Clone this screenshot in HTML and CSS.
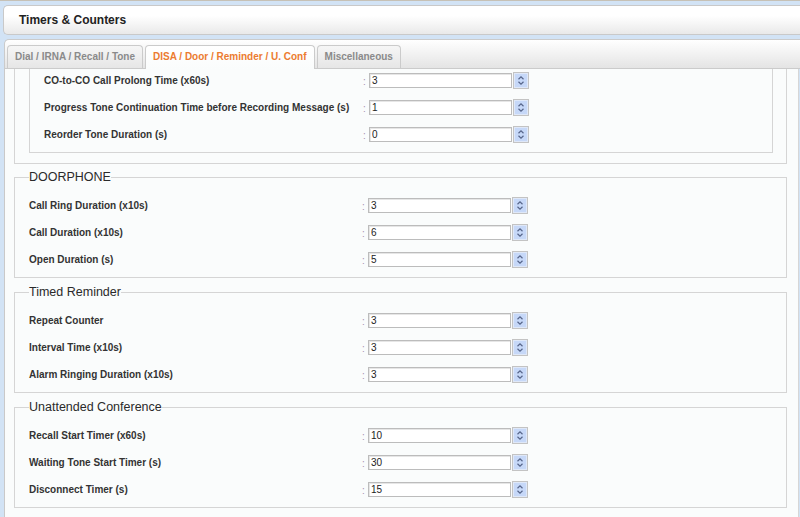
FILE: index.html
```html
<!DOCTYPE html>
<html>
<head>
<meta charset="utf-8">
<title>Timers &amp; Counters</title>
<link rel="stylesheet" href="styles.css">
</head>
<body>
<div class="page">
  <header class="titlebar"><h1>Timers &amp; Counters</h1></header>
  <div class="tabs-panel">
    <ul class="tabbar">
      <li class="tab">Dial / IRNA / Recall / Tone</li>
      <li class="tab active">DISA / Door / Reminder / U. Conf</li>
      <li class="tab">Miscellaneous</li>
    </ul>
    <div class="pane">
      <div class="outer-cut">
        <div class="inner-cut rows">
          <div class="row"><span class="label inner">CO-to-CO Call Prolong Time (x60s)</span><span class="colon">:</span><input class="num" type="text" value="3"><span class="spin"><svg viewBox="0 0 14 15" width="14" height="15"><path d="M4.5 6.2 L7 3.8 L9.5 6.2 M4.5 8.8 L7 11.2 L9.5 8.8" fill="none" stroke="#56658a" stroke-width="1.2"/></svg></span></div>
          <div class="row"><span class="label inner">Progress Tone Continuation Time before Recording Message (s)</span><span class="colon">:</span><input class="num" type="text" value="1"><span class="spin"><svg viewBox="0 0 14 15" width="14" height="15"><path d="M4.5 6.2 L7 3.8 L9.5 6.2 M4.5 8.8 L7 11.2 L9.5 8.8" fill="none" stroke="#56658a" stroke-width="1.2"/></svg></span></div>
          <div class="row"><span class="label inner">Reorder Tone Duration (s)</span><span class="colon">:</span><input class="num" type="text" value="0"><span class="spin"><svg viewBox="0 0 14 15" width="14" height="15"><path d="M4.5 6.2 L7 3.8 L9.5 6.2 M4.5 8.8 L7 11.2 L9.5 8.8" fill="none" stroke="#56658a" stroke-width="1.2"/></svg></span></div>
        </div>
      </div>

      <fieldset class="group">
        <legend>DOORPHONE</legend>
        <div class="rows">
          <div class="row"><span class="label">Call Ring Duration (x10s)</span><span class="colon">:</span><input class="num" type="text" value="3"><span class="spin"><svg viewBox="0 0 14 15" width="14" height="15"><path d="M4.5 6.2 L7 3.8 L9.5 6.2 M4.5 8.8 L7 11.2 L9.5 8.8" fill="none" stroke="#56658a" stroke-width="1.2"/></svg></span></div>
          <div class="row"><span class="label">Call Duration (x10s)</span><span class="colon">:</span><input class="num" type="text" value="6"><span class="spin"><svg viewBox="0 0 14 15" width="14" height="15"><path d="M4.5 6.2 L7 3.8 L9.5 6.2 M4.5 8.8 L7 11.2 L9.5 8.8" fill="none" stroke="#56658a" stroke-width="1.2"/></svg></span></div>
          <div class="row"><span class="label">Open Duration (s)</span><span class="colon">:</span><input class="num" type="text" value="5"><span class="spin"><svg viewBox="0 0 14 15" width="14" height="15"><path d="M4.5 6.2 L7 3.8 L9.5 6.2 M4.5 8.8 L7 11.2 L9.5 8.8" fill="none" stroke="#56658a" stroke-width="1.2"/></svg></span></div>
        </div>
      </fieldset>

      <fieldset class="group">
        <legend>Timed Reminder</legend>
        <div class="rows">
          <div class="row"><span class="label">Repeat Counter</span><span class="colon">:</span><input class="num" type="text" value="3"><span class="spin"><svg viewBox="0 0 14 15" width="14" height="15"><path d="M4.5 6.2 L7 3.8 L9.5 6.2 M4.5 8.8 L7 11.2 L9.5 8.8" fill="none" stroke="#56658a" stroke-width="1.2"/></svg></span></div>
          <div class="row"><span class="label">Interval Time (x10s)</span><span class="colon">:</span><input class="num" type="text" value="3"><span class="spin"><svg viewBox="0 0 14 15" width="14" height="15"><path d="M4.5 6.2 L7 3.8 L9.5 6.2 M4.5 8.8 L7 11.2 L9.5 8.8" fill="none" stroke="#56658a" stroke-width="1.2"/></svg></span></div>
          <div class="row"><span class="label">Alarm Ringing Duration (x10s)</span><span class="colon">:</span><input class="num" type="text" value="3"><span class="spin"><svg viewBox="0 0 14 15" width="14" height="15"><path d="M4.5 6.2 L7 3.8 L9.5 6.2 M4.5 8.8 L7 11.2 L9.5 8.8" fill="none" stroke="#56658a" stroke-width="1.2"/></svg></span></div>
        </div>
      </fieldset>

      <fieldset class="group">
        <legend>Unattended Conference</legend>
        <div class="rows">
          <div class="row"><span class="label">Recall Start Timer (x60s)</span><span class="colon">:</span><input class="num" type="text" value="10"><span class="spin"><svg viewBox="0 0 14 15" width="14" height="15"><path d="M4.5 6.2 L7 3.8 L9.5 6.2 M4.5 8.8 L7 11.2 L9.5 8.8" fill="none" stroke="#56658a" stroke-width="1.2"/></svg></span></div>
          <div class="row"><span class="label">Waiting Tone Start Timer (s)</span><span class="colon">:</span><input class="num" type="text" value="30"><span class="spin"><svg viewBox="0 0 14 15" width="14" height="15"><path d="M4.5 6.2 L7 3.8 L9.5 6.2 M4.5 8.8 L7 11.2 L9.5 8.8" fill="none" stroke="#56658a" stroke-width="1.2"/></svg></span></div>
          <div class="row"><span class="label">Disconnect Timer (s)</span><span class="colon">:</span><input class="num" type="text" value="15"><span class="spin"><svg viewBox="0 0 14 15" width="14" height="15"><path d="M4.5 6.2 L7 3.8 L9.5 6.2 M4.5 8.8 L7 11.2 L9.5 8.8" fill="none" stroke="#56658a" stroke-width="1.2"/></svg></span></div>
        </div>
      </fieldset>
    </div>
  </div>
</div>
</body>
</html>
```

FILE: styles.css
```css
html, body {
  margin: 0;
  height: 100%;
}

body {
  background: #d2e3f5;
  border-top: 1px solid #c6c1b6;
  box-sizing: border-box;
  overflow: hidden;
  font-family: "Liberation Sans", Arial, sans-serif;
  color: #333;
}

.page {
  padding: 4px 0 0 3px;
}

.titlebar {
  height: 28px;
  border: 1px solid #c9c9c9;
  border-right: none;
  border-radius: 5px 0 0 5px;
  background: linear-gradient(#ffffff 35%, #e9e9e9);
  display: flex;
  align-items: center;
  padding-left: 15px;
}

.titlebar h1 {
  margin: 0;
  font-size: 12px;
  font-weight: bold;
  color: #222;
}

.tabs-panel {
  margin: 4px 1px 0 1px;
}

.tabbar {
  list-style: none;
  margin: 0 -1px 0 0;
  display: flex;
  gap: 2px;
  padding: 5px 0 0 2px;
  height: 23px;
  border: 1px solid #cbcbcb;
  border-right: none;
  border-radius: 5px 0 0 0;
  background: linear-gradient(#ffffff, #e4e4e4);
}

.tab {
  box-sizing: border-box;
  height: 23px;
  border: 1px solid #cbcbcb;
  border-bottom: none;
  border-radius: 4px 4px 0 0;
  padding: 0 7px;
  font-size: 10px;
  font-weight: bold;
  line-height: 22px;
  color: #8a8a8a;
  background: linear-gradient(#f6f6f6, #e6e6e6);
  white-space: nowrap;
}

.tab.active {
  height: 24px;
  margin-bottom: -1px;
  color: #ec7b30;
  background: linear-gradient(#ffffff, #fafcfc);
}

.pane {
  background: #fafcfc;
  border-left: 1px solid #c9c9c9;
  border-right: 1px solid #d6d6d6;
  height: 460px;
  padding: 0 11px 0 9px;
}

.outer-cut {
  border: 1px solid #d5d5d5;
  border-top: none;
  padding: 0 13px 10px 14px;
}

.inner-cut {
  border: 1px solid #d5d5d5;
  border-top: none;
  padding: 3px 0 9px 14px;
}

.group {
  margin: 6px 0 0 0;
  border: 1px solid #d5d5d5;
  padding: 13px 13px 9px 14px;
  min-width: 0;
}

.group + .group {
  margin-top: 7px;
}

.group legend {
  padding: 0;
  font-size: 12.5px;
  line-height: 14px;
  color: #2a2a2a;
}

.rows {
  display: flex;
  flex-direction: column;
  gap: 10px;
}

.row {
  display: flex;
  align-items: center;
  height: 17px;
}

.label {
  width: 335px;
  flex: none;
  font-size: 10px;
  font-weight: bold;
  color: #333;
  white-space: nowrap;
  margin-top: -1px;
}

.label.inner {
  width: 321px;
}

.colon {
  width: 4px;
  flex: none;
  font-size: 10px;
  color: #a690b0;
  margin-top: 2px;
  margin-left: -2px;
  margin-right: 2px;
}

.num {
  box-sizing: border-box;
  width: 143px;
  height: 15px;
  margin: 0;
  padding: 0 2px;
  border: 1px solid #bcbcbc;
  box-shadow: inset 1px 1px 0 #e6e6e6;
  background: #fff;
  font-family: "Liberation Sans", Arial, sans-serif;
  font-size: 10px;
  color: #222;
  outline: none;
}

.spin {
  box-sizing: border-box;
  width: 16px;
  height: 17px;
  margin-left: 1px;
  border: 1px solid #c3c3c3;
  background: #c6d8f8;
  box-shadow: inset 0 0 0 1px #dfe8f8;
  display: flex;
}
```
